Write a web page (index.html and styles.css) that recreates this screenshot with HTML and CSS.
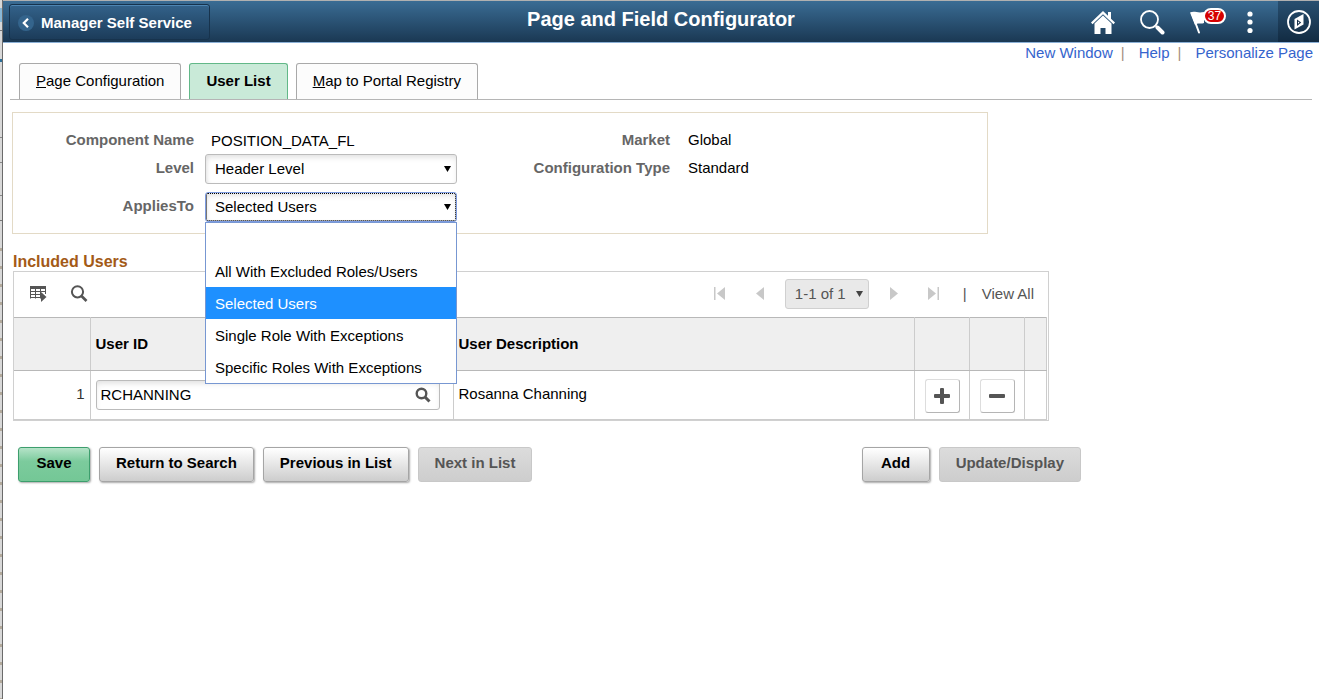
FILE: index.html
```html
<!DOCTYPE html>
<html lang="en">
<head>
<meta charset="utf-8">
<title>Page and Field Configurator</title>
<link rel="stylesheet" href="styles.css">
</head>
<body>
<div class="shell">
  <div class="edge"></div>
  <div class="page">
    <header class="banner">
      <button type="button" class="back">
        <svg width="16" height="16" viewBox="0 0 16 16" aria-hidden="true"><circle cx="8" cy="8" r="8" fill="#34648c"/><path d="M10 3.800 5.800 8l4.200 4.200" fill="none" stroke="#fff" stroke-width="2.200"/></svg>
        <span>Manager Self Service</span>
      </button>
      <h1 class="title">Page and Field Configurator</h1>
      <nav class="tools" aria-label="Global">
        <button type="button" class="tool" aria-label="Home">
          <svg width="24" height="24" viewBox="0 0 24 24"><path d="M12 1 0 12.500l1.500 1.700L12 4.200l10.500 10 1.500-1.700-4-3.800V2h-3v3.800z" fill="#fff"/><path d="M12 5.500 3.500 13.600V24h6v-6h5v6h6V13.600z" fill="#fff"/></svg>
        </button>
        <button type="button" class="tool" aria-label="Search">
          <svg width="26" height="26" viewBox="0 0 26 26" fill="none" stroke="#fff"><circle cx="10.500" cy="10.500" r="8.500" stroke-width="1.800"/><path d="m17 17 2 2" stroke-width="2"/><path d="m18.500 18.500 5 5" stroke-width="4" stroke-linecap="round"/></svg>
        </button>
        <button type="button" class="tool" aria-label="Notifications">
          <svg width="26" height="26" viewBox="0 0 26 26"><path d="m4 4.500 7 19" stroke="#fff" stroke-width="2" stroke-linecap="round"/><path d="M2 3.500c5-2 7 1 14-.5v11c-4 1.500-5.500-1-9 2z" fill="#fff"/></svg>
          <span class="count">37</span>
        </button>
        <button type="button" class="tool" aria-label="Actions">
          <svg width="8" height="24" viewBox="0 0 8 24" fill="#fff"><circle cx="4" cy="4" r="2.600"/><circle cx="4" cy="12" r="2.600"/><circle cx="4" cy="20.500" r="2.600"/></svg>
        </button>
        <button type="button" class="tool navbar" aria-label="NavBar">
          <svg width="24" height="24" viewBox="0 0 24 24" fill="none" stroke="#fff"><circle cx="12" cy="12" r="11" stroke-width="1.800"/><path d="m7.500 9 9-5v10.500l-9 5z" fill="#fff" stroke="none"/><path d="m10 9.500 4.200 3L10 16z" fill="#16304a" stroke="none"/><path d="m11 11.500 1.500 1-1.500 1.200z" fill="#fff" stroke="none"/></svg>
        </button>
      </nav>
    </header>

    <nav class="links" aria-label="Page">
      <a href="#">New Window</a><span class="bar">|</span><a href="#">Help</a><span class="bar">|</span><a href="#">Personalize Page</a>
    </nav>

    <nav class="tabs" aria-label="Component">
      <a class="tab" href="#"><u>P</u>age Configuration</a>
      <a class="tab current" href="#" aria-current="page">User List</a>
      <a class="tab" href="#"><u>M</u>ap to Portal Registry</a>
    </nav>

    <main class="content">
      <section class="details">
        <span class="label">Component Name</span>
        <span class="value inset">POSITION_DATA_FL</span>
        <span class="label">Market</span>
        <span class="value">Global</span>

        <label class="label field" for="level">Level</label>
        <div class="picker">
          <select id="level"><option>Header Level</option></select>
          <svg class="caret" width="7" height="6" viewBox="0 0 7 6"><path d="M0 0h7L3.500 6z"/></svg>
        </div>
        <span class="label field">Configuration Type</span>
        <span class="value field">Standard</span>

        <label class="label field" for="applies">AppliesTo</label>
        <div class="picker open">
          <select id="applies"><option>Selected Users</option></select>
          <svg class="caret" width="7" height="6" viewBox="0 0 7 6"><path d="M0 0h7L3.500 6z"/></svg>
          <ul class="menu" role="listbox" aria-label="AppliesTo options">
            <li role="option" aria-selected="false"></li>
            <li role="option" aria-selected="false">All With Excluded Roles/Users</li>
            <li role="option" aria-selected="true" class="chosen">Selected Users</li>
            <li role="option" aria-selected="false">Single Role With Exceptions</li>
            <li role="option" aria-selected="false">Specific Roles With Exceptions</li>
          </ul>
        </div>
      </section>

      <h2 class="heading">Included Users</h2>
      <section class="panel">
        <div class="toolbar">
          <button type="button" class="plain" aria-label="Grid actions">
            <svg width="18" height="16" viewBox="0 0 18 16" fill="none" stroke="#555"><path d="M1 1.500h15" stroke-width="3"/><path d="M.5 0v12.500M5.500 3v9.500M10.500 3v9.500M15.500 0v8M0 5.500h16M0 8.500h11M0 11.500h10"/><path d="m11 6 5.500 5-5.500 5z" fill="#555" stroke="none"/></svg>
          </button>
          <button type="button" class="plain" aria-label="Find">
            <svg width="18" height="17" viewBox="0 0 18 17" fill="none" stroke="#555"><circle cx="7.500" cy="6.800" r="5.600" stroke-width="2"/><path d="m11.500 11 5 5" stroke-width="2.600"/></svg>
          </button>
          <div class="pager">
            <button type="button" class="plain" aria-label="First"><svg width="11" height="13" viewBox="0 0 11 13"><path d="M0 0h1.500v13H0zM11 0v13L3 6.500z"/></svg></button>
            <button type="button" class="plain" aria-label="Previous"><svg width="8" height="13" viewBox="0 0 8 13"><path d="M8 0v13L0 6.500z"/></svg></button>
            <div class="picker range">
              <select aria-label="Rows"><option>1-1 of 1</option></select>
              <svg class="caret" width="7" height="6" viewBox="0 0 7 6"><path d="M0 0h7L3.500 6z"/></svg>
            </div>
            <button type="button" class="plain" aria-label="Next"><svg width="8" height="13" viewBox="0 0 8 13"><path d="M0 0v13l8-6.500z"/></svg></button>
            <button type="button" class="plain" aria-label="Last"><svg width="11" height="13" viewBox="0 0 11 13"><path d="M9.500 0H11v13H9.500zM0 0v13l8-6.500z"/></svg></button>
            <span class="split">|</span>
            <a class="all" href="#">View All</a>
          </div>
        </div>
        <table class="grid">
          <colgroup><col class="c-num"><col class="c-id"><col><col class="c-act"><col class="c-act"><col class="c-end"></colgroup>
          <thead><tr><th></th><th>User ID</th><th>User Description</th><th></th><th></th><th></th></tr></thead>
          <tbody><tr>
            <td class="num">1</td>
            <td>
              <div class="lookup">
                <input type="text" value="RCHANNING" aria-label="User ID">
                <button type="button" class="plain" aria-label="Look up User ID"><svg width="16" height="16" viewBox="0 0 16 16" fill="none" stroke="#555"><circle cx="6.500" cy="6.500" r="4.800" stroke-width="2.400"/><path d="m10 10 4.500 4.500" stroke-width="3"/></svg></button>
              </div>
            </td>
            <td>Rosanna Channing</td>
            <td class="act"><button type="button" class="square" aria-label="Add row"><svg width="16" height="16" viewBox="0 0 16 16" fill="#555"><rect x="6" width="4" height="16" rx="1"/><rect y="6" width="16" height="4" rx="1"/></svg></button></td>
            <td class="act"><button type="button" class="square" aria-label="Delete row"><svg width="16" height="16" viewBox="0 0 16 16" fill="#555"><rect y="6" width="16" height="4" rx="1"/></svg></button></td>
            <td></td>
          </tr></tbody>
        </table>
      </section>

      <div class="actions">
        <button type="button" class="btn save">Save</button>
        <button type="button" class="btn">Return to Search</button>
        <button type="button" class="btn">Previous in List</button>
        <button type="button" class="btn" disabled>Next in List</button>
        <button type="button" class="btn push">Add</button>
        <button type="button" class="btn" disabled>Update/Display</button>
      </div>
    </main>
  </div>
</div>
</body>
</html>
```
FILE: styles.css
```css
* { box-sizing: border-box; }

body {
  margin: 0;
  background: #fff;
  color: #000;
  font: 15px/20px "Liberation Sans", Arial, sans-serif;
}

button, input, select { font: inherit; color: inherit; }
svg { display: block; }
a { text-decoration: none; }

.shell { display: flex; min-height: 100vh; }

.edge {
  flex: none;
  width: 3px;
  border-right: 1px solid #6b6b6b;
  background:
    linear-gradient(#777, #777) 0 30px / 2px 1px no-repeat,
    linear-gradient(#2b6f99, #2b6f99) 0 59px / 2px 3px no-repeat,
    linear-gradient(#8ab8d6, #8ab8d6) 0 8px / 2px 14px no-repeat,
    linear-gradient(#888, #888) 0 137px / 2px 1px no-repeat,
    linear-gradient(#888, #888) 0 162px / 2px 1px no-repeat,
    linear-gradient(#888, #888) 0 195px / 2px 1px no-repeat,
    linear-gradient(#777, #777) 0 220px / 2px 1px no-repeat,
    repeating-linear-gradient(#d8d8d8 0 8px, #b3aa9c 8px 11px, #d8d8d8 11px 18px) 0 240px no-repeat,
    #d8d8d8;
}

.page { flex: 1; min-width: 0; }

.banner {
  display: grid;
  grid-template-columns: 1fr auto 1fr;
  height: 43px;
  border-top: 1px solid #b0b0b0;
  border-bottom: 1px solid #8bb0d6;
  background: linear-gradient(#3a6c94, #1a3853);
  color: #fff;
}

.back {
  display: flex;
  align-items: center;
  justify-self: start;
  gap: 7px;
  height: 36px;
  margin: 3px 0 0 6px;
  padding: 2px 17px 0 8px;
  border: 1px solid #17334d;
  border-radius: 3px;
  background: linear-gradient(#33628a, #1c3c5a);
  box-shadow: inset 0 1px #4d85b3;
  font-weight: bold;
}

.title { margin: 0; padding-top: 6px; font-size: 20px; line-height: 24px; }

.tools { display: flex; justify-content: flex-end; }

.tool {
  position: relative;
  display: flex;
  align-items: center;
  justify-content: center;
  width: 49px;
  padding: 0;
  border: 0;
  background: none;
}

.navbar { width: 41px; margin-left: 4px; background: linear-gradient(#284f70, #122b42); }

.count {
  position: absolute;
  top: 7px;
  left: 27px;
  width: 23px;
  border: 2px solid #fff;
  border-radius: 8px;
  background: #d60000;
  font-size: 12px;
  line-height: 12px;
}

.links { display: flex; justify-content: flex-end; padding-right: 6px; }
.links a { color: #3564cd; }
.bar { padding: 0 14px 0 8px; color: #a58d80; }

.tabs {
  display: flex;
  gap: 8px;
  margin: 0 7px;
  padding-left: 9px;
  border-bottom: 1px solid #b5b5b5;
}

.tab {
  height: 36px;
  padding: 7px 16px;
  border: 1px solid #a9a9a9;
  border-bottom: 0;
  border-radius: 3px 3px 0 0;
  background: #fcfcfc;
  color: #000;
}

.tab.current { border-color: #62b888; background: #c9ead8; font-weight: bold; }

.content { padding: 12px 9px; }

.details {
  display: grid;
  grid-template-columns: 181px 252px 202px 1fr;
  grid-template-rows: 24px 38px 38px;
  column-gap: 11px;
  align-items: start;
  max-width: 976px;
  padding: 17px 0 3px;
  border: 1px solid #e3dac6;
}

.label { color: #666; font-weight: bold; text-align: right; }
.details .value { padding-left: 7px; }
.details .inset { padding: 1px 0 0 6px; }
.details .field { padding-top: 4px; }

.picker { position: relative; height: 30px; }

.picker select {
  appearance: none;
  display: block;
  width: 100%;
  height: 30px;
  padding: 0 24px 0 9px;
  border: 1px solid #bbb;
  border-radius: 3px;
  background: #fff;
  box-shadow: inset 0 4px 6px -2px #ddd, inset 3px 0 5px -3px #ddd;
}

.picker.open select { border-color: #7c9be0; outline: 1px dotted #000; outline-offset: -2px; }

.caret { position: absolute; top: 12px; right: 6px; pointer-events: none; }

.menu {
  position: absolute;
  z-index: 2;
  top: 30px;
  left: 0;
  right: 0;
  margin: 0;
  padding: 0;
  border: 1px solid #7797d2;
  background: #fff;
  list-style: none;
}

.menu li { height: 32px; padding: 7px 9px 5px; }
.menu .chosen { background: #1e90ff; color: #fff; }

.heading { margin: 18px 0 0 1px; color: #a35a17; font-size: 16px; line-height: 19px; }

.panel {
  max-width: 1036px;
  margin-left: 1px;
  padding-right: 1px;
  border: 1px solid #d0d0d0;
}

.toolbar { display: flex; align-items: center; gap: 22px; height: 45px; padding: 0 13px 2px 16px; }

.plain { flex: none; padding: 0; border: 0; background: none; }

.pager { display: flex; align-items: center; margin-left: auto; color: #555; }
.pager .plain { width: 30px; display: flex; justify-content: center; fill: #c8c8c8; }
.pager .plain + .plain { margin: 0 10px; }
.range { width: 84px; }
.range + .plain { margin-left: 10px; }
.range select { padding-right: 10px; border-color: #d0d0d0; background: #e9e9e9; box-shadow: none; }
.range .caret { fill: #444; }
.split { padding: 0 15px 0 4px; }
.all { color: #555; }

.grid { width: 100%; border-collapse: collapse; table-layout: fixed; }
.grid th, .grid td { padding: 0 5px; border: 1px solid #ccc; text-align: left; }
.grid th { height: 53px; border-top-color: #b8b8b8; border-bottom-color: #b8b8b8; background: #efefef; }
.grid td { height: 49px; }
.grid tr > :first-child { border-left: 0; }
.grid td:nth-child(3) { padding-bottom: 3px; }
.grid .num { padding-bottom: 3px; text-align: right; color: #333; }
.grid .act { padding: 2px 0 0; }
.c-num { width: 76px; }
.c-id { width: 363px; }
.c-act { width: 55px; }
.c-end { width: 22px; }

.lookup {
  display: flex;
  align-items: center;
  height: 30px;
  margin-right: 8px;
  padding-right: 8px;
  border: 1px solid #bbb;
  border-radius: 3px;
  box-shadow: inset 0 4px 6px -2px #ddd;
}

.lookup input { flex: 1; min-width: 0; padding: 0 4px; border: 0; background: none; }

.square {
  display: flex;
  align-items: center;
  justify-content: center;
  width: 35px;
  height: 34px;
  margin: 0 auto;
  padding: 0;
  border: 1px solid #ddd;
  border-right-color: #b5b5b5;
  border-bottom-color: #b5b5b5;
  border-radius: 3px;
  background: #fff;
}

.actions { display: flex; gap: 9px; max-width: 1069px; margin-top: 26px; padding-left: 6px; }

.btn {
  min-width: 68px;
  height: 35px;
  padding: 0 16px 4px;
  border: 1px solid #a5a5a5;
  border-radius: 3px;
  background: linear-gradient(#fff, #cdcdcd);
  box-shadow: 1px 1px 2px #aaa;
  font-weight: bold;
}

.btn.save { min-width: 72px; border-color: #3d9e6d; background: linear-gradient(#b5e3c8, #7ccb9d 40%, #74c796); }
.btn:disabled { border-color: #c8c8c8; background: linear-gradient(#dcdcdc, #cdcdcd); box-shadow: none; color: #555; }
.push { margin-left: auto; }
```
